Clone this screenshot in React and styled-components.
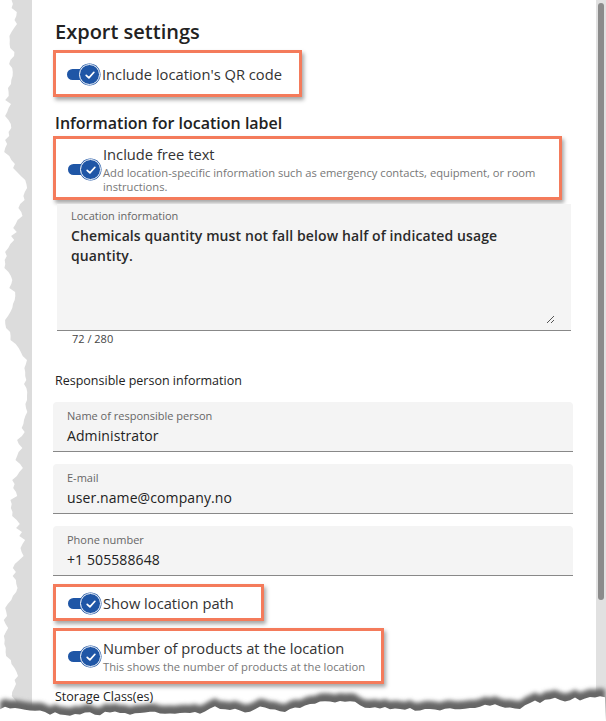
import React from 'react';
import styled, { createGlobalStyle } from 'styled-components';

const GlobalStyle = createGlobalStyle`
  html, body {
    margin: 0;
    padding: 0;
    background: #ffffff;
    overflow: hidden;
  }
  * { box-sizing: border-box; }
`;

// small seeded random so the torn edges look the same on every run
const makeRand = seed => {
  let s = seed;
  return () => {
    s = (s * 16807) % 2147483647;
    return (s - 1) / 2147483646;
  };
};

const leftEdgePoints = () => {
  const rand = makeRand(42);
  const pts = [];
  let drift = 16;
  for (let y = 0; y <= 721; y += 4) {
    drift += (rand() - 0.5) * 9;
    drift = Math.max(5, Math.min(27, drift));
    const x = drift + (rand() - 0.5) * 3;
    pts.push(`${x.toFixed(1)},${y}`);
  }
  return pts.join(' ');
};

const bottomEdgeValues = () => {
  const rand = makeRand(7);
  const vals = [];
  let wobble = 0;
  for (let x = 0; x <= 606; x += 5) {
    wobble += (rand() - 0.5) * 5;
    wobble = Math.max(-5, Math.min(5, wobble));
    const base = 32 - 9 * (x / 606);
    vals.push([x, base + wobble + (rand() - 0.5) * 2]);
  }
  return vals;
};

const TornLeft = () => (
  <LeftSvg width="32" height="721" viewBox="0 0 32 721">
    <polygon points={`0,0 ${leftEdgePoints()} 0,721`} fill="#ffffff" />
  </LeftSvg>
);

const TornBottom = () => {
  const vals = bottomEdgeValues();
  const edge = vals.map(([x, y]) => `${x},${y.toFixed(1)}`).join(' ');
  const lower = vals.map(([x, y]) => `${x},${(y + 8).toFixed(1)}`).join(' ');
  return (
    <BottomSvg width="606" height="50" viewBox="0 0 606 50">
      <defs>
        <filter id="blur" x="-5%" y="-50%" width="110%" height="200%">
          <feGaussianBlur stdDeviation="2" />
        </filter>
      </defs>
      <polygon points={`0,50 ${edge} 606,50`} fill="#666" filter="url(#blur)" />
      <polygon points={`0,50 ${lower} 606,50`} fill="#ffffff" />
    </BottomSvg>
  );
};

const ToggleOn = () => (
  <Toggle>
    <Track />
    <Thumb>
      <svg width="12" height="12" viewBox="0 0 12 12">
        <path d="M2.2 6.3 L4.9 8.9 L9.9 3.3" fill="none" stroke="#fff" strokeWidth="1.7" strokeLinecap="round" strokeLinejoin="round" />
      </svg>
    </Thumb>
  </Toggle>
);

const SwitchRow = ({ label, hint, width, pad }) => (
  <Highlight $width={width}>
    <ToggleRow $pad={pad}>
      <ToggleOn />
      <ToggleText>
        <ToggleLabel>{label}</ToggleLabel>
        {hint && <ToggleHint>{hint}</ToggleHint>}
      </ToggleText>
    </ToggleRow>
  </Highlight>
);

const Field = ({ label, value }) => (
  <FieldBox>
    <FieldLabel>{label}</FieldLabel>
    <FieldValue>{value}</FieldValue>
  </FieldBox>
);

const App = () => {
  return (
    <Screen>
      <GlobalStyle />
      <LeftStrip>
        <TornLeft />
      </LeftStrip>
      <Panel>
        <Title>Export settings</Title>
        <SwitchRow label="Include location's QR code" width={249} pad="10px 10px 9px 8px" />
        <SubTitle>Information for location label</SubTitle>
        <SwitchRow
          width={509}
          pad="5px 10px 3px 9px"
          label="Include free text"
          hint="Add location-specific information such as emergency contacts, equipment, or room instructions."
        />
        <TextArea>
          <FieldLabel>Location information</FieldLabel>
          <AreaText>Chemicals quantity must not fall below half of indicated usage quantity.</AreaText>
          <ResizeGrip width="9" height="9" viewBox="0 0 9 9">
            <path d="M1 8 L8 1 M5 8 L8 5" stroke="#555" strokeWidth="1" />
          </ResizeGrip>
        </TextArea>
        <Counter>72 / 280</Counter>
        <GroupLabel>Responsible person information</GroupLabel>
        <Fields>
          <Field label="Name of responsible person" value="Administrator" />
          <Field label="E-mail" value="user.name@company.no" />
          <Field label="Phone number" value="+1 505588648" />
        </Fields>
        <Switches>
          <SwitchRow label="Show location path" width={211} pad="5px 10px 4px 9px" />
          <SwitchRow
            width={331}
            pad="7px 10px 7px 9px"
            label="Number of products at the location"
            hint="This shows the number of products at the location"
          />
        </Switches>
        <GroupLabel $top={5}>Storage Class(es)</GroupLabel>
      </Panel>
      <ScrollTrack>
        <ScrollThumb />
      </ScrollTrack>
      <TornBottom />
    </Screen>
  );
};

export default App;

const Screen = styled.div`
  position: relative;
  width: 606px;
  height: 721px;
  overflow: hidden;
  display: flex;
  background: #ffffff;
  font-family: 'Open Sans', 'Noto Sans', sans-serif;
  color: #222;
`;

const LeftStrip = styled.div`
  position: relative;
  width: 32px;
  flex: none;
  background: #dcdcdc;
`;

const LeftSvg = styled.svg`
  position: absolute;
  top: 0;
  left: 0;
  display: block;
`;

const BottomSvg = styled.svg`
  position: absolute;
  left: 0;
  bottom: 0;
  display: block;
`;

const Panel = styled.div`
  flex: 1;
  padding: 19px 23px 0 21px;
  display: flex;
  flex-direction: column;
  align-items: flex-start;
`;

const Title = styled.h1`
  margin: 0 0 5px 2px;
  font-size: 20px;
  line-height: 26px;
  font-weight: 600;
  color: #222;
`;

const SubTitle = styled.h2`
  margin: 15px 0 2px 2px;
  font-size: 16px;
  line-height: 22px;
  font-weight: 600;
  color: #222;
`;

const Highlight = styled.div`
  width: ${p => p.$width}px;
  border: 3px solid #f47b5b;
  box-shadow: 2px 3px 4px rgba(0, 0, 0, 0.35);
  background: #ffffff;
`;

const ToggleRow = styled.div`
  display: flex;
  align-items: center;
  padding: ${p => p.$pad};
`;

const Toggle = styled.div`
  position: relative;
  width: 38px;
  height: 22px;
  flex: none;
`;

const Track = styled.div`
  position: absolute;
  left: 3px;
  top: 6px;
  width: 26px;
  height: 11px;
  border-radius: 6px;
  background: #1f56a6;
`;

const Thumb = styled.div`
  position: absolute;
  left: 15px;
  top: 1px;
  width: 21px;
  height: 21px;
  border-radius: 50%;
  background: #1f56a6;
  border: 1px solid #ffffff;
  box-shadow: 0 0 0 0.5px #1f56a6;
  display: flex;
  align-items: center;
  justify-content: center;
`;

const ToggleText = styled.div`
  display: flex;
  flex-direction: column;
`;

const ToggleLabel = styled.div`
  font-size: 14.7px;
  line-height: 20px;
  color: #333;
`;

const ToggleHint = styled.div`
  font-size: 11.2px;
  line-height: 14px;
  color: #777;
  margin-top: 2px;
`;

const TextArea = styled.div`
  position: relative;
  width: 514px;
  height: 127px;
  margin: 4px 0 0 4px;
  padding: 4px 14px 0 14px;
  background: #f4f4f4;
  border-bottom: 1px solid #888;
`;

const FieldLabel = styled.div`
  font-size: 11px;
  line-height: 15px;
  color: #666;
`;

const AreaText = styled.div`
  margin-top: 3px;
  font-size: 14px;
  line-height: 20px;
  font-weight: 600;
  letter-spacing: 0.1px;
  color: #2a2a2a;
`;

const ResizeGrip = styled.svg`
  position: absolute;
  right: 16px;
  bottom: 6px;
`;

const Counter = styled.div`
  margin: 1px 0 0 19px;
  font-size: 11px;
  line-height: 14px;
  color: #444;
`;

const GroupLabel = styled.div`
  margin: ${p => (p.$top !== undefined ? p.$top : 27)}px 0 0 2px;
  font-size: 12.5px;
  line-height: 16px;
  color: #222;
`;

const Fields = styled.div`
  margin-top: 13px;
  width: 520px;
  display: flex;
  flex-direction: column;
  gap: 12px;
`;

const FieldBox = styled.div`
  height: 50px;
  padding: 6px 14px 0 14px;
  background: #f4f4f4;
  border-radius: 4px 4px 0 0;
  border-bottom: 1px solid #888;
`;

const FieldValue = styled.div`
  margin-top: 3px;
  font-size: 14px;
  line-height: 20px;
  font-weight: 500;
  letter-spacing: 0.1px;
  color: #222;
`;

const Switches = styled.div`
  margin-top: 8px;
  display: flex;
  flex-direction: column;
  gap: 7px;
`;

const ScrollTrack = styled.div`
  width: 10px;
  flex: none;
  background: #e1e1e1;
  padding: 3px 2px 0 2px;
`;

const ScrollThumb = styled.div`
  height: 597px;
  border-radius: 3px;
  background: #8b8b8b;
`;
